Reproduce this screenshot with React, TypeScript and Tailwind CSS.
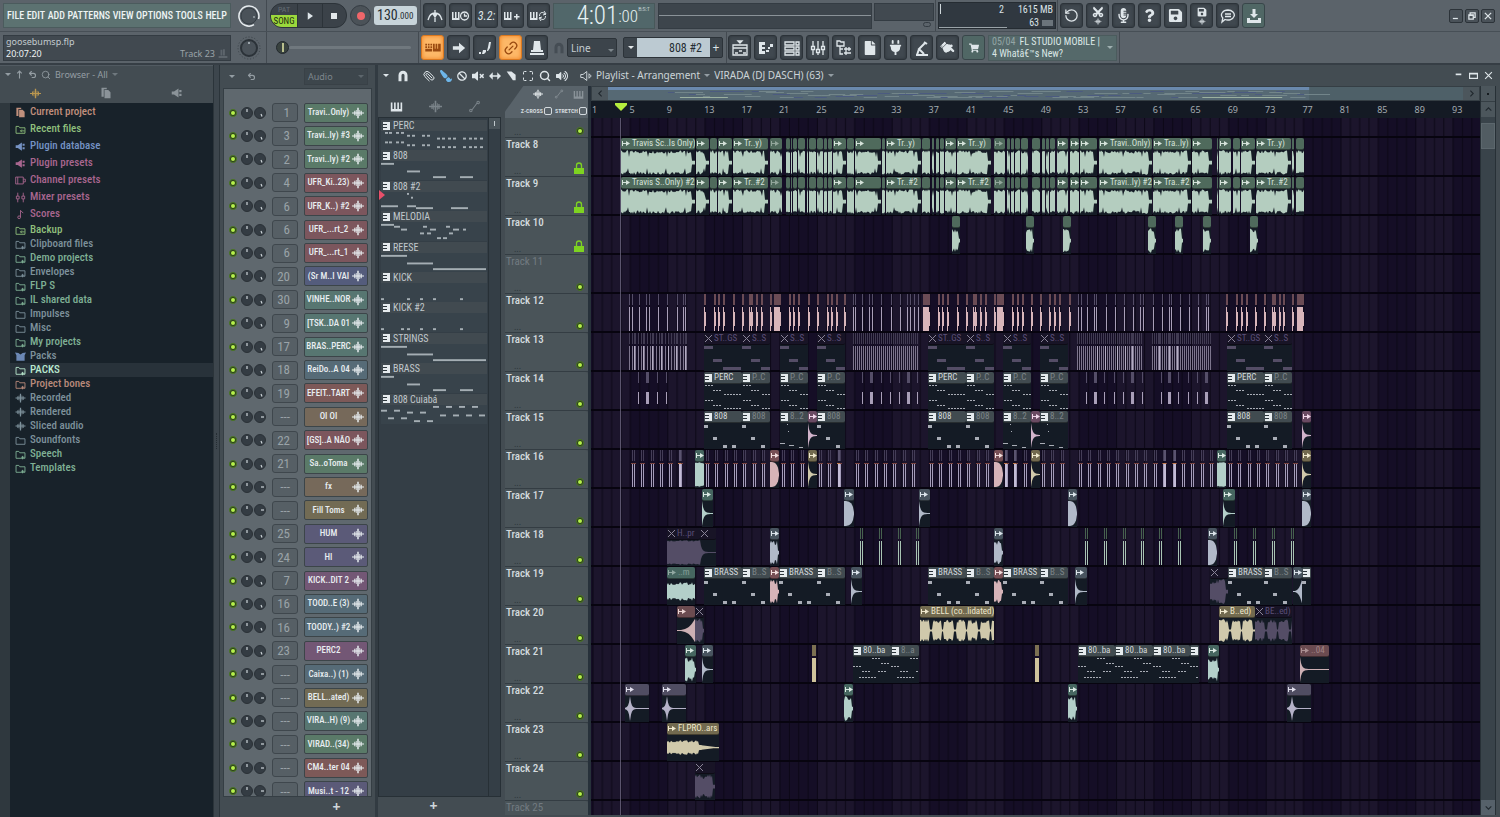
import React from "react";
import {
  FaBan,
  FaCut,
  FaFile,
  FaHandPointRight,
  FaMicrophoneAlt,
  FaPaintBrush,
  FaPlug,
  FaQuestion,
  FaSave,
  FaShoppingCart,
  FaVolumeMute,
  FaVolumeUp,
} from "react-icons/fa";
import { Link2, Maximize, Paperclip, RotateCcw, Search, Undo2 } from "lucide-react";

const NARROW = "font-['Roboto_Condensed',Roboto,sans-serif]";

const BAR = 9.35;
const BODY_H = 25;

type Tone = "green" | "teal" | "slate" | "pink" | "plum" | "gold" | "mauve" | "lilac" | "pattern" | "muted";
type Wave = "voice" | "decay" | "blob" | "reverse" | "thick" | "spike" | "fade" | "burst" | "phrases" | "solid";

interface Clip {
  x: number;
  w: number;
  label?: string;
  dim?: boolean;
  tone: Tone;
  wave?: Wave;
  notes?: number[][];
}

interface Hits {
  xs: number[];
  color: string;
  head: string;
  w?: number;
  top?: number;
  h?: number;
  tail?: boolean;
  tick?: string;
}

interface Track {
  name: string;
  locked?: boolean;
  off?: boolean;
  clips?: Clip[];
  hits?: Hits[];
}

const headTone: Record<Tone, string> = {
  green: "bg-[#4f6a5c] text-[#d5e2da]",
  teal: "bg-[#466660] text-[#dbe9e4]",
  slate: "bg-[#48545f] text-[#dbe3ea]",
  pink: "bg-[#774f55] text-[#f0dcdc]",
  plum: "bg-[#6a4b63] text-[#f0d8ea]",
  gold: "bg-[#726a4f] text-[#efe8cd]",
  mauve: "bg-[#6b4b50] text-[#ecd6d4]",
  lilac: "bg-[#504d62] text-[#e2e0ee]",
  pattern: "bg-[#414b50] text-[#d3d9dc]",
  muted: "bg-[#181426] text-[#5b4f78]",
};

const waveTone: Record<Tone, string> = {
  green: "#b4cdbf",
  teal: "#b3cfc9",
  slate: "#b1b9c8",
  pink: "#d6b3b8",
  plum: "#d2b4cb",
  gold: "#d0c9ab",
  mauve: "#cdb0b4",
  lilac: "#b5b2c8",
  pattern: "#a9adb6",
  muted: "#544d66",
};

const triple = (x: number, y: number) => [
  [x, y, 2],
  [x + 3, y, 2],
  [x + 6, y, 2],
];

const perc = [
  ...triple(1, 1),
  ...triple(9, 6),
  ...triple(20, 10),
  ...triple(29, 10),
  ...triple(1, 16),
  ...triple(9, 21),
  ...triple(20, 24),
  ...triple(29, 24),
];
const bass = [[0, 2, 4, 3], [9, 14, 4, 3], [19, 22, 4, 3], [28, 22, 4, 3]];
const bass2 = [[0, 20, 5], [7, 1, 1], [8, 8, 1], [9, 22, 5], [19, 24, 4]];
const strings = [[0, 1, 9, 3], [9, 14, 9, 3], [19, 22, 18, 3]];
const cuiaba = [
  ...triple(0, 9),
  ...triple(9, 14),
  ...triple(19, 1),
  ...triple(28, 6),
  ...triple(6, 20),
  ...triple(15, 20),
  ...triple(25, 14),
];

const pat = (x: number, w: number, label: string, notes: number[][], dim = false): Clip => ({
  x,
  w,
  label,
  notes,
  dim,
  tone: "pattern",
});
const aud = (x: number, w: number, tone: Tone, wave: Wave, label = "", dim = false): Clip => ({
  x,
  w,
  tone,
  wave,
  label,
  dim,
});
const ghost = (x: number, w: number, label: string): Clip => ({ x, w, label, tone: "muted", notes: strings });

const vocals = (first: string, short: string, long: string, mid: string): Clip[] =>
  [
    [30, 74, first],
    [105, 13], [119, 7, "", 1], [127, 14], [142, 35, short],
    [179, 12, "", 1], [195, 4], [200, 1], [202, 4], [207, 7, "", 1],
    [216, 1], [218, 7, "", 1], [226, 6], [233, 3], [237, 4],
    [242, 13], [256, 7, "", 1], [264, 26], [291, 3],
    [295, 35, short], [331, 8], [341, 2], [345, 3], [349, 4],
    [354, 11], [366, 34, short], [403, 11, "", 1], [416, 3], [420, 3], [424, 5],
    [430, 7, "", 1], [441, 8, "", 1], [451, 3], [455, 3], [459, 5],
    [466, 11], [479, 9], [489, 17], [508, 53, long],
    [562, 38, mid], [601, 20], [626, 1], [628, 12],
    [642, 7, "", 1], [650, 14], [665, 35, short], [701, 2], [705, 8, "", 1],
  ].map((c) => aud(c[0] as number, c[1] as number, "green", "voice", (c[2] as string) || "", c[3] === 1));

const range = (from: number, to: number, step: number) => {
  const out: number[] = [];
  for (let x = from; x < to; x += step) out.push(Math.round(x));
  return out;
};

const pairs = (spans: number[][]) => spans.flatMap(([a, b]) => range(a, b, BAR).flatMap((x) => [x, x + 2]));

const lilacHits = { color: "#a99fb8", head: "#554e68" };
const pinkHits = { color: "#d8b5ba", head: "#6b4c55" };
const greenHits = { color: "#a9c4b4", head: "#47614f" };

const tracks: Track[] = [
  {
    name: "Track 8",
    locked: true,
    clips: vocals("Travis Sc..ls Only)", "Tr..y)", "Travi..Only)", "Tra..ly)"),
  },
  {
    name: "Track 9",
    locked: true,
    clips: vocals("Travis S..Only) #2", "Tr..#2", "Travi..ly) #2", "Tra..#2"),
  },
  {
    name: "Track 10",
    locked: true,
    clips: [361, 435, 472, 557, 584, 612, 659].map((x) => aud(x, 8, "green", "burst")),
  },
  { name: "Track 11", off: true },
  {
    name: "Track 12",
    hits: [
      {
        ...lilacHits,
        w: 1,
        xs: [38, 41, 48, 55, 58, 67, 76, 86, 92, 94, 262, 264, 271, 278, 281, 290, 300, 309, 316, 319, 323, 327, 487,
          490, 496, 503, 505, 515, 524, 533, 542, 549, 552, 562, 571, 578, 580, 589, 598, 607, 615, 617],
      },
      {
        ...pinkHits,
        w: 1,
        tail: true,
        xs: [113, 123, 127, 132, 142, 151, 158, 160, 165, 170, 179, 198, 202, 207, 217, 226, 236, 240, 245, 253,
          347, 351, 356, 366, 375, 382, 384, 389, 394, 403, 421, 426, 431, 440, 449, 458, 463, 468, 478,
          635, 645, 650, 655, 664, 673, 681, 683, 688, 692, 701],
      },
      { ...pinkHits, w: 6, tail: true, xs: [183, 332, 406, 706] },
    ],
  },
  {
    name: "Track 13",
    hits: [
      {
        color: "#7d758d",
        head: "#413b52",
        w: 1,
        xs: [...range(38, 96, 3), ...range(262, 328, 2), ...range(486, 552, 2), ...range(561, 621, 2)],
      },
      { color: "#b3abc2", head: "#413b52", w: 1, xs: [43, 52, 61, 70, 77, 85, 94, 506, 514, 526, 534, 541, 568, 578, 586] },
    ],
    clips: [
      ghost(113, 38, "ST..GS"), ghost(151, 28, "S..S"), ghost(189, 28, "S..S"), ghost(226, 28, "S..S"),
      ghost(337, 38, "ST..GS"), ghost(375, 28, "S..S"), ghost(412, 28, "S..S"), ghost(449, 28, "S..S"),
      ghost(636, 37, "ST..GS"), ghost(673, 28, "S..S"),
    ],
  },
  {
    name: "Track 14",
    hits: [
      {
        ...lilacHits,
        w: 1,
        top: 20,
        h: 12,
        xs: [47, 66, 75, 271, 290, 299, 308, 326, 495, 513, 523, 532, 551, 570, 587, 597, 606],
      },
      { ...lilacHits, w: 3, top: 20, h: 12, xs: [55, 279, 316, 503, 540, 577, 614] },
    ],
    clips: [
      pat(113, 38, "PERC", perc), pat(151, 28, "P..C", perc, true), pat(189, 28, "P..C", perc, true),
      pat(226, 28, "P..C", perc, true), pat(337, 38, "PERC", perc), pat(375, 28, "P..C", perc, true),
      pat(412, 28, "P..C", perc, true), pat(449, 28, "P..C", perc, true), pat(636, 37, "PERC", perc),
      pat(673, 28, "P..C", perc, true),
    ],
  },
  {
    name: "Track 15",
    clips: [
      pat(113, 38, "808", bass), pat(151, 28, "808", bass, true), pat(189, 28, "8..2", bass2, true),
      aud(217, 9, "plum", "decay"), pat(226, 28, "808", bass, true),
      pat(337, 38, "808", bass), pat(375, 28, "808", bass, true), pat(412, 28, "8..2", bass2, true),
      aud(440, 9, "plum", "decay"), pat(449, 28, "8..2", bass2, true),
      pat(636, 37, "808", bass), pat(673, 28, "808", bass, true), aud(711, 9, "plum", "decay"),
    ],
  },
  {
    name: "Track 16",
    hits: [
      {
        color: "#a59dba",
        head: "#443d57",
        w: 1,
        tick: "#7a4440",
        xs: pairs([[41, 96], [115, 178], [191, 216], [228, 256], [265, 328], [339, 402], [414, 439], [451, 476], [488, 622], [638, 708]]),
      },
      { color: "#c3bcd6", head: "#5a536f", w: 2, tick: "#c07a4a", xs: [88, 247, 414, 423, 573, 583] },
    ],
    clips: [
      aud(104, 9, "teal", "solid"), aud(179, 9, "pink", "blob"), aud(217, 9, "gold", "decay"),
      aud(403, 9, "pink", "blob"), aud(440, 9, "gold", "decay"),
      aud(626, 9, "teal", "solid"), aud(711, 9, "gold", "decay"),
    ],
  },
  {
    name: "Track 17",
    clips: [
      aud(111, 11, "teal", "decay"), aud(253, 10, "slate", "blob"), aud(328, 11, "slate", "decay"),
      aud(477, 9, "slate", "blob"), aud(632, 12, "teal", "decay"), aud(711, 9, "slate", "blob"),
    ],
  },
  {
    name: "Track 18",
    hits: [
      {
        ...greenHits,
        w: 1,
        xs: [269, 288, 307, 325, 494, 513, 532, 550, 568, 587, 643, 662, 681, 700].flatMap((x) => [x, x + 2]),
      },
    ],
    clips: [
      aud(76, 33, "muted", "solid", "H..pr"), aud(109, 16, "muted", "decay"),
      aud(179, 9, "slate", "burst"), aud(403, 9, "slate", "burst"), aud(617, 9, "slate", "blob"),
    ],
  },
  {
    name: "Track 19",
    clips: [
      aud(76, 28, "teal", "thick", "..m", true), pat(113, 38, "BRASS", bass), pat(151, 28, "B..S", bass, true),
      aud(179, 9, "pink", "burst"), pat(188, 38, "BRASS", bass), pat(226, 28, "B..S", bass, true),
      aud(260, 11, "slate", "decay"), pat(337, 38, "BRASS", bass), pat(375, 28, "B..S", bass, true),
      aud(403, 9, "pink", "burst"), pat(412, 37, "BRASS", bass), pat(449, 28, "B..S", bass, true),
      aud(484, 12, "slate", "decay"), aud(619, 18, "muted", "burst"), pat(637, 36, "BRASS", bass),
      pat(673, 28, "B..S", bass, true), aud(702, 9, "slate", "reverse"), pat(711, 9, "", bass),
    ],
  },
  {
    name: "Track 20",
    clips: [
      aud(86, 18, "mauve", "reverse"), aud(104, 9, "muted", "burst"),
      aud(329, 74, "gold", "phrases", "BELL (co..lidated)"), aud(628, 36, "gold", "phrases", "B..ed)"),
      aud(664, 37, "muted", "phrases", "BE..ed)"),
    ],
  },
  {
    name: "Track 21",
    hits: [{ color: "#cfc39b", head: "#7c7152", w: 4, xs: [221, 444] }],
    clips: [
      aud(94, 11, "teal", "burst"), aud(111, 11, "slate", "decay"),
      pat(262, 38, "80..ba", cuiaba), pat(300, 28, "8..a", cuiaba, true),
      pat(487, 37, "80..ba", cuiaba), pat(524, 38, "80..ba", cuiaba), pat(562, 37, "80..ba", cuiaba),
      pat(599, 9, "", cuiaba), aud(617, 11, "teal", "burst"), aud(709, 29, "mauve", "decay", "..04", true),
    ],
  },
  {
    name: "Track 22",
    clips: [
      aud(34, 24, "lilac", "spike"), aud(71, 24, "lilac", "spike"), aud(253, 9, "teal", "burst"),
      aud(477, 9, "teal", "burst"), aud(696, 24, "lilac", "spike"),
    ],
  },
  { name: "Track 23", clips: [aud(76, 52, "gold", "fade", "FLPRO..ars")] },
  { name: "Track 24", clips: [aud(104, 20, "muted", "burst")] },
];

const noise = (n: number) => {
  const s = Math.sin(n * 12.9898) * 43758.5453;
  return s - Math.floor(s);
};

function amplitude(kind: Wave, i: number, w: number, seed: number) {
  const t = i / w;
  const r = noise(i + seed);
  switch (kind) {
    case "voice":
      if (w > 12 && i > w - 4) return 0.15;
      return (i + seed) % 19 === 0 ? 0.45 : 0.72 + 0.26 * r;
    case "phrases": {
      const p = i % 24;
      return (p > 9 && p < 13) || p > 21 ? 0.08 : 0.55 + 0.35 * r;
    }
    case "decay":
      return i === 0 ? 1 : 0.9 * Math.exp(-i / 1.6) + 0.04;
    case "blob":
      return Math.sqrt(Math.max(0.01, 1 - t ** 3));
    case "reverse":
      return 0.04 + 0.9 * t ** 3;
    case "thick":
      return 0.5 + 0.25 * r;
    case "spike":
      return 0.04 + 0.95 * Math.exp(-Math.abs(i - 5) / 1.3);
    case "fade":
      return t < 0.6 ? 0.4 + 0.2 * r : Math.max(0.05, 0.55 * (1 - t));
    case "burst":
      return t > 0.85 ? 0.15 : 0.6 + 0.38 * noise(i + seed);
    default:
      return 0.88 + 0.1 * r;
  }
}

const Waveform: React.FC<{ kind: Wave; w: number; seed: number; color: string }> = ({ kind, w, seed, color }) => {
  const mid = BODY_H / 2;
  const up: string[] = [];
  const down: string[] = [];
  for (let i = 0; i <= w; i++) {
    const a = amplitude(kind, i, w, seed) * mid;
    const b = kind === "voice" ? amplitude(kind, i, w, seed + 77) * mid : a;
    up.push(`${i},${mid - a}`);
    down.unshift(`${i},${mid + b}`);
  }
  return (
    <svg viewBox={`0 0 ${w} ${BODY_H}`} preserveAspectRatio="none" className="block h-[25px] w-full">
      <polygon points={[...up, ...down].join(" ")} fill={color} />
    </svg>
  );
};

const ArrowMark = () => (
  <svg viewBox="0 0 8 7" className="block h-[7px] w-[8px]" fill="currentColor">
    <path d="M0 1h1v5H0zM1 3h3v1H1zM4 1l4 2.500L4 6z" />
  </svg>
);

const PatternMark = () => (
  <svg viewBox="0 0 7 8" className="block h-[8px] w-[7px] shrink-0">
    <path d="M0 0h7v8H0z" fill="#e6ebee" />
    <path d="M0 2h4v1H0zM0 5h4v1H0z" fill="#2b343a" />
  </svg>
);

const CrossMark = () => (
  <svg viewBox="0 0 7 7" className="block h-[7px] w-[7px]" stroke="#8a8498" fill="none">
    <path d="M0 0l7 7M7 0L0 7" />
  </svg>
);

const ClipView: React.FC<{ clip: Clip }> = ({ clip }) => {
  const { x, w, label, dim, tone, wave, notes } = clip;
  return (
    <div className="absolute top-0 h-[38px] overflow-hidden bg-[#141b25]" style={{ left: x, width: w }}>
      <div
        className={`flex h-[12px] items-center gap-[2px] overflow-hidden rounded-[2px] border-b border-black/40 pl-px text-[9px] leading-[11px] whitespace-nowrap ${headTone[tone]}`}
      >
        {w > 8 && (
          <span className={`shrink-0 ${dim && tone !== "pattern" ? "opacity-50" : ""}`}>
            {tone === "muted" ? <CrossMark /> : tone === "pattern" ? <PatternMark /> : <ArrowMark />}
          </span>
        )}
        {label && <span className={dim ? "opacity-40" : ""}>{label}</span>}
      </div>
      {wave && <Waveform kind={wave} w={w} seed={x} color={waveTone[tone]} />}
      {notes && (
        <svg viewBox={`0 0 ${w} 26`} className="block h-[26px] w-full" fill={waveTone[tone]}>
          {notes.map(([nx, ny, nw, nh], i) => (
            <rect key={i} x={nx} y={ny} width={nw} height={nh || 1} />
          ))}
        </svg>
      )}
    </div>
  );
};

const Lane: React.FC<{ track: Track }> = ({ track }) => (
  <div className="relative h-[39px] shrink-0 border-b-2 border-[#07040f]">
    {track.hits && (
      <svg className="absolute inset-0 h-full w-full">
        {track.hits.map((group, g) =>
          group.xs.map((x) => (
            <React.Fragment key={`${g}-${x}`}>
              <rect x={x} y={0} width={(group.w ?? 1) + (group.tail ? 1 : 0)} height={11} fill={group.head} />
              <rect x={x} y={group.top ?? 13} width={group.w} height={group.h ?? 25} fill={group.color} />
              {group.tail && <rect x={x + (group.w ?? 1)} y={18} width={1} height={14} fill={group.color} />}
              {group.tick && <rect x={x - 1} y={13} width={3} height={1} fill={group.tick} />}
            </React.Fragment>
          ))
        )}
      </svg>
    )}
    {track.clips?.map((c, i) => (
      <ClipView key={i} clip={c} />
    ))}
  </div>
);

const GridBackdrop = () => (
  <svg className="absolute inset-0 h-full w-full">
    <defs>
      <pattern id="bars" x="1.5" y="0" width={BAR * 8} height="40" patternUnits="userSpaceOnUse">
        <rect width={BAR * 4} height="40" fill="#1c152c" />
        <rect x={BAR * 4} width={BAR * 4} height="40" fill="#150e26" />
        {range(0, 8, 1).map((n) => (
          <rect key={n} x={n * BAR} width="1" height="40" fill="#0b0716" />
        ))}
      </pattern>
    </defs>
    <rect width="100%" height="100%" fill="url(#bars)" />
  </svg>
);

/* ---------- toolbar ---------- */

const TOOL =
  "flex h-[25px] w-[23px] shrink-0 items-center justify-center rounded-[3px] border border-[#2c3339] bg-[#40484f] text-[#dfe6ea] shadow-[inset_0_0_3px_#2b3238]";
const TOOL_ON =
  "flex h-[25px] w-[23px] shrink-0 items-center justify-center rounded-[3px] border border-[#d9781f] bg-[#fdb868] text-[#9a4a10] shadow-[inset_0_0_4px_#f08020]";
const TOOL_TEAL =
  "flex h-[25px] w-[23px] shrink-0 items-center justify-center rounded-[3px] border border-[#39464a] bg-[#506765] text-[#dfe6ea]";

const Tool: React.FC<{ label: string; className?: string; children: React.ReactNode }> = ({
  label,
  className = TOOL,
  children,
}) => (
  <button type="button" aria-label={label} className={className}>
    {children}
  </button>
);

const Glyph: React.FC<{ d: string; fill?: boolean; className?: string }> = ({
  d,
  fill,
  className = "h-[16px] w-[16px]",
}) => (
  <svg
    viewBox="0 0 16 16"
    className={className}
    fill={fill ? "currentColor" : "none"}
    stroke={fill ? "none" : "currentColor"}
    strokeWidth="1.3"
  >
    <path d={d} />
  </svg>
);

const PIANO = "M1 3h2v8h2V3h2v8h2V3h2v8h2V3h2v11H1z";
const PIANO_SMALL = "M0 4h1.500v6H3V4h1.500v6H6V4h1.500v8H0z";
const WAVE = "M0 7.200h16v1.600H0zM3 5h1.500v6H3zM7 1h2v14H7zM5.200 4h1v8h-1zM9.800 4h1v8h-1zM11.500 5H13v6h-1.500z";
const FOLDER = "M1.500 3.500h4l1.500 2h7.500v8h-13z";
const NODES = "M2 13a1.500 1.500 0 1 0 3 0 1.500 1.500 0 1 0-3 0M11 3a1.500 1.500 0 1 0 3 0 1.500 1.500 0 1 0-3 0M5 12l6-8";
const MAGNET = "M2 15V7a6 6 0 0 1 12 0v8h-4V7a2 2 0 0 0-4 0v8z";
const MIXER = "M3 1v5M3 10v5M1.500 6.500h3v3h-3zM8 1v8M8 13v2M6.500 9.500h3v3h-3zM13 1v5M13 10v5M11.500 6.500h3v3h-3z";
const CHAT = "M8 2a6.500 5 0 1 1-3 9.500L2 14l.8-4A6.500 5 0 0 1 8 2M5 6h6M5 8.500h6";

const Caret = ({ className = "border-t-[#aab3b8]" }: { className?: string }) => (
  <span className={`inline-block h-0 w-0 border-x-[3px] border-t-[3px] border-x-transparent ${className}`} />
);

const Divider = () => <div className="h-full w-px shrink-0 bg-[#434a51]" />;

const menus = ["FILE", "EDIT", "ADD", "PATTERNS", "VIEW", "OPTIONS", "TOOLS", "HELP"];

const Toolbar = () => (
  <header className="shrink-0 border-b-2 border-[#363e45] bg-[#5b636a] text-[#dfe6ea]">
    <div className="flex h-[32px] items-center border-b border-[#474f56]">
      <nav
        className={`ml-[3px] flex h-[25px] w-[228px] shrink-0 items-center justify-between border border-[#4b5b5d] bg-[#5c7271] px-[3px] text-[10px] font-medium text-[#eef4f4] ${NARROW}`}
      >
        {menus.map((m) => (
          <button key={m} type="button">
            {m}
          </button>
        ))}
      </nav>
      <div className="flex h-full w-[35px] shrink-0 items-center justify-center">
        <svg viewBox="0 0 24 24" className="h-[24px] w-[24px]" fill="none">
          <path d="M17 20.700A10 10 0 1 1 21.500 15" stroke="#e8edf0" strokeWidth="1.500" />
          <circle cx="12" cy="12" r="8" fill="#4a5259" stroke="#343c43" />
          <circle cx="17" cy="13" r="1" fill="#9aa3a8" />
        </svg>
      </div>
      <Divider />
      <div className="ml-[3px] flex h-[25px] w-[77px] shrink-0 overflow-hidden rounded-[12px] border border-[#2c3339] bg-[#3b4249]">
        <div className={`flex w-[26px] flex-col items-center justify-end ${NARROW}`}>
          <button type="button" className="text-[8px] leading-[11px] text-[#636c73]">
            PAT
          </button>
          <button type="button" className="h-[12px] w-full bg-[#9bd83c] text-[9px] leading-[12px] text-[#1d2a10]">
            SONG
          </button>
        </div>
        <button type="button" aria-label="Play" className="flex flex-1 items-center justify-center border-l border-[#2c3339]">
          <Glyph fill d="M5 3l7 5-7 5z" className="h-[12px] w-[12px]" />
        </button>
        <button type="button" aria-label="Stop" className="flex flex-1 items-center justify-center border-l border-[#2c3339]">
          <span className="h-[6px] w-[6px] bg-[#e3e8ea]" />
        </button>
      </div>
      <button
        type="button"
        aria-label="Record"
        className="ml-[3px] flex h-[21px] w-[21px] shrink-0 items-center justify-center rounded-full border border-[#343b42] bg-[#4b5258]"
      >
        <span className="h-[8px] w-[8px] rounded-full bg-[#f0666a]" />
      </button>
      <div
        className={`ml-[3px] flex h-[19px] w-[43px] shrink-0 items-center rounded-[3px] bg-[#c8d4da] pl-[3px] text-[14px] text-[#252d33] ${NARROW}`}
      >
        130<span className="pt-[3px] text-[9px]">.000</span>
      </div>
      <div className="ml-[3px] h-full">
        <Divider />
      </div>
      <div className="ml-[2px] flex shrink-0 gap-[3px]">
        <Tool label="Metronome"><Glyph d="M1 12c1-4 3-7 7-7s6 3 7 7M8 2v12M6 6l2 3 2-3z" /></Tool>
        <Tool label="Wait for input">
          <svg viewBox="0 0 18 16" className="h-[16px] w-[18px]">
            <path d={PIANO_SMALL} fill="currentColor" />
            <path d="M12.500 4a4 4 0 1 0 .01 0M12.500 5.500V8H15" fill="none" stroke="currentColor" strokeWidth="1.300" />
          </svg>
        </Tool>
        <Tool label="Countdown"><span className={`text-[12px] italic ${NARROW}`}>3.2:</span></Tool>
        <Tool label="Overdub">
          <svg viewBox="0 0 18 16" className="h-[16px] w-[18px]" fill="currentColor">
            <path d={PIANO_SMALL} />
            <path d="M10 8h2V6h1.500v2h2v1.500h-2v2H12v-2h-2z" />
          </svg>
        </Tool>
        <Tool label="Loop record">
          <svg viewBox="0 0 18 16" className="h-[16px] w-[18px]">
            <path d={PIANO_SMALL} fill="currentColor" />
            <path d="M9.500 8c0-5 5-4 6-1M15.500 8c0 5-5 4-6 1M14 3l2 3-3 1M11 13l-2-3 3-1" fill="none" stroke="currentColor" />
          </svg>
        </Tool>
      </div>
      <div
        className={`ml-[3px] flex h-[26px] w-[102px] shrink-0 items-center justify-end border border-[#48585a] bg-[#51676a] pr-[4px] text-[25px] leading-[24px] font-light text-[#e6f2f4] ${NARROW}`}
      >
        4:01<span className="text-[17px]">:00</span>
        <span className="self-start text-[6px] leading-[10px]">B:S:T</span>
      </div>
      <div className="ml-[3px] flex h-[26px] w-[214px] shrink-0 items-center border border-[#343c43] bg-[#3d454c]">
        <div className="h-px w-full bg-[#8a9298]" />
      </div>
      <div className="ml-[2px] flex h-[26px] w-[60px] shrink-0 flex-col items-end">
        <div className="h-[18px] w-full border border-[#343c43] bg-[#414950]" />
        <span className="mt-px mr-[3px] h-[5px] w-[8px] rounded-full border border-[#343c43]" />
      </div>
      <div className="ml-px h-full">
        <Divider />
      </div>
      <div className={`ml-[2px] flex h-[27px] w-[118px] shrink-0 border border-[#252c32] bg-[#303840] text-[10px] text-[#dbe3e7] ${NARROW}`}>
        <div className="flex w-[68px] justify-between border-b border-[#9aa3a8] pt-px pr-[3px] pl-px leading-[11px]">
          <span className="h-[10px] w-px bg-[#d0d8dc]" />
          <span>2</span>
        </div>
        <div className="flex flex-1 flex-col items-end pr-[2px] leading-[13px] whitespace-nowrap">
          <span>1615 MB</span>
          <span className="flex items-center gap-[3px]">
            63 <span className="h-[6px] w-[11px] bg-[#6b747b]" />
          </span>
        </div>
      </div>
      <div className="ml-px h-full">
        <Divider />
      </div>
      <div className="ml-[2px] flex shrink-0 gap-[3px]">
        <Tool label="Undo"><RotateCcw size={15} /></Tool>
        <Tool label="Cut audio">
          <span className="flex flex-col items-center">
            <FaCut size={12} className="-rotate-90" />
            <Glyph fill d={WAVE} className="h-[7px] w-[10px]" />
          </span>
        </Tool>
        <Tool label="Record audio"><FaMicrophoneAlt size={15} /></Tool>
        <Tool label="Help"><FaQuestion size={13} /></Tool>
        <Tool label="Save"><FaSave size={15} /></Tool>
        <Tool label="Export">
          <span className="flex flex-col items-center gap-px">
            <FaSave size={10} />
            <Glyph fill d={WAVE} className="h-[7px] w-[10px]" />
          </span>
        </Tool>
        <Tool label="Chat"><Glyph d={CHAT} /></Tool>
        <Tool label="Download" className={TOOL_TEAL}>
          <Glyph fill d="M6.500 1h3v5H12L8 10 4 6h2.500zM1 10h3v2h8v-2h3v5H1z" />
        </Tool>
      </div>
      <div className="mr-[5px] ml-auto flex gap-[2px]">
        {[
          ["Minimize", "M3 12h8"],
          ["Restore", "M5 6V3h8v7h-3M3 6h7v7H3zM3 7h7"],
          ["Close", "M3 3l10 10M13 3L3 13"],
        ].map(([label, d]) => (
          <button
            key={label}
            type="button"
            aria-label={label}
            className="flex h-[14px] w-[14px] items-center justify-center rounded-[2px] border border-[#2c3339] bg-[#4a5259]"
          >
            <Glyph d={d} className="h-[10px] w-[10px] stroke-2" />
          </button>
        ))}
      </div>
    </div>

    <div className="flex h-[31px] items-center">
      <div className="ml-[3px] flex h-[26px] w-[228px] shrink-0 flex-col justify-between border border-[#343c43] bg-[#414950] px-[2px] text-[9px] leading-[12px] font-['Noto_Sans',sans-serif]">
        <span className="text-[#c3cbcf]">goosebumsp.flp</span>
        <div className="flex items-center">
          <span className="text-[#eef2f4]">20:07:20</span>
          <span className="mr-[3px] ml-auto text-[#9aa3a8]">Track 23</span>
          <Glyph fill d="M1 12h14v3H1zM4 2h3v9H4zM8 1h3v10H8z" className="h-[11px] w-[10px] text-[#5d656c]" />
        </div>
      </div>
      <div className="flex h-full w-[35px] shrink-0 items-center justify-center">
        <svg viewBox="0 0 24 24" className="h-[24px] w-[24px]" fill="none">
          <circle cx="12" cy="12" r="11" stroke="#3a4248" strokeDasharray="1 2" />
          <circle cx="12" cy="12" r="8" fill="#4a5259" stroke="#2b3238" strokeWidth="2" />
          <circle cx="12" cy="7" r="1" fill="#b9c2c7" />
        </svg>
      </div>
      <Divider />
      <div className="flex w-[151px] shrink-0 items-center pl-[9px]">
        <span className="flex h-[13px] w-[13px] shrink-0 items-center justify-center rounded-full border border-[#23292e] bg-[#39423f]">
          <span className="h-[9px] w-[2px] bg-[#b9bf8d]" />
        </span>
        <span className="h-[3px] w-[122px] rounded-[2px] bg-[#70787e]" />
      </div>
      <Divider />
      <div className="ml-[2px] flex shrink-0 gap-[3px]">
        <Tool label="Typing keyboard to piano" className={TOOL_ON}>
          <svg viewBox="0 0 18 14" className="h-[12px] w-[18px]" fill="currentColor">
            <path d="M0 2h2v2H0zM3 2h2v2H3zM6 2h2v2H6zM0 5h2v2H0zM3 5h2v2H3zM6 5h2v2H6zM0 8h8v3H0zM9 2h2v6h1V2h2v6h1V2h3v9H9z" />
          </svg>
        </Tool>
        <Tool label="Step"><Glyph fill d="M1 6h7V2l7 6-7 6v-4H1z" className="h-[14px] w-[14px]" /></Tool>
        <Tool label="Scroll"><Glyph fill d="M12 2h2l-1 6-2 3h-1l1-4zM6 10h3v2l-2 2H5zM2 12h2v2H2z" /></Tool>
        <Tool label="Link" className={TOOL_ON}><Link2 size={16} className="-rotate-45" /></Tool>
        <Tool label="Multilink"><Glyph fill d="M5 1h6l1 9H4zM2 10h12v2H2zM1 13h14v2H1z" /></Tool>
      </div>
      <Glyph d={MAGNET} fill className="ml-[5px] h-[12px] w-[12px] shrink-0 text-[#454d54]" />
      <div className="relative ml-[2px] h-[19px] w-[50px] shrink-0">
        <select
          aria-label="Snap"
          defaultValue="Line"
          className="block h-[19px] w-full appearance-none rounded-[2px] border border-[#2c3339] bg-[#3c444b] pl-[3px] text-[10px] leading-[16px] text-[#c5cdd2] font-['Noto_Sans',sans-serif]"
        >
          <option>Line</option>
        </select>
        <span className="absolute top-[5px] right-[3px] leading-[6px]">
          <Caret className="border-t-[#7e878d]" />
        </span>
      </div>
      <div className="ml-[6px] flex h-[21px] w-[100px] shrink-0 rounded-[2px] border border-[#2c3339] bg-[#3c444b]">
        <button type="button" aria-label="Pattern list" className="flex w-[13px] items-center justify-center">
          <Caret className="border-t-[#e3e8ea]" />
        </button>
        <input
          aria-label="Pattern"
          defaultValue="808 #2"
          className={`h-full w-[73px] bg-[#bccad2] pr-[8px] text-right text-[12px] text-[#252d33] ${NARROW}`}
        />
        <button type="button" className="w-[12px] text-[12px] leading-[18px]">
          +
        </button>
      </div>
      <div className="ml-[3px] h-full">
        <Divider />
      </div>
      <div className="ml-px flex shrink-0 gap-[3px]">
        <Tool label="Playlist"><Glyph d="M1 5h14v10H1zM1 8h14M3 13h3M7 11h3M11 13h3M6 1l2 2 2-2z" /></Tool>
        <Tool label="Piano roll"><Glyph fill d="M1 2h6v3H4v2h3v2H4v2h3v3H1zM8 10h3v2H8zM10 7h2v2h-2zM12 4h3v3h-3z" /></Tool>
        <Tool label="Channel rack"><Glyph d="M1 2h9v3H1zM1 7h9v3H1zM1 12h9v3H1zM12 2h3v3h-3zM12 7h3v3h-3zM12 12h3v3h-3z" /></Tool>
        <Tool label="Mixer"><Glyph d={MIXER} /></Tool>
        <Tool label="Browser"><Glyph d="M1 1h3l1 1h3v4H1zM4 6v8h3M4 9h3M10 7v8M8 9h7M8 13h7M13 7v4" /></Tool>
        <Tool label="Plugin picker"><FaFile size={14} /></Tool>
        <Tool label="Plugins"><FaPlug size={15} /></Tool>
        <Tool label="Tempo tapper"><Glyph d="M10 2l3 2M11 3L5 9l5 5M2 15h12M5 9l-2 6" className="h-[16px] w-[16px] stroke-2" /></Tool>
        <Tool label="Touch"><FaHandPointRight size={14} className="rotate-45" /></Tool>
        <Tool label="Shop" className={TOOL_TEAL}><FaShoppingCart size={10} /></Tool>
      </div>
      <div className="ml-[3px] flex h-[26px] w-[129px] shrink-0 items-center justify-between border border-[#4b5b5d] bg-[#55696a] px-[3px] text-[10px] leading-[12px]">
        <p className={`whitespace-nowrap text-[#dbe7e6] ${NARROW}`}>
          <span className="mr-[4px] text-[#93a5a5]">05/04</span>FL STUDIO MOBILE |
          <br />4 Whatâ€™s New?
        </p>
        <Caret className="border-t-[#9fb0b0]" />
      </div>
      <div className="ml-[2px] h-full">
        <Divider />
      </div>
    </div>
  </header>
);

/* ---------- browser ---------- */

const copyIcon = "M2 1h7v2H5v10H2zM6 4h5l3 3v8H6z";
const speakerIcon = "M1 6h3l6-4v12l-6-4H1zM11 4h3v3h-3zM11 9h3v3h-3z";

const browserTop = [
  ["Current project", "text-[#c08f7c]", copyIcon, true],
  ["Recent files", "text-[#8fbf7c]", FOLDER + "M8 10h6M8 10l2-2M8 10l2 2", false],
  ["Plugin database", "text-[#7593c4]", speakerIcon, true],
  ["Plugin presets", "text-[#a8668f]", speakerIcon, true],
  ["Channel presets", "text-[#a8668f]", "M1 3h11v10H1zM12 6h3v4h-3M4 3v10", false],
  ["Mixer presets", "text-[#a8668f]", "M4 1v5M4 10v5M2 6h4v4H2zM12 1v5M12 10v5M10 6h4v4h-4z", false],
  ["Scores", "text-[#a8668f]", "M8 2v10M8 2l4 4M8 12a2 2 0 1 1-4 0 2 2 0 1 1 4 0", false],
] as const;

const plusFolder = FOLDER + "M11 10v5M9 12h5";
const browserItems = [
  ["Backup", "text-[#8fbf7c]", FOLDER + "M8 10h6M8 10l2-2M8 10l2 2"],
  ["Clipboard files", "text-[#7d919b]", plusFolder],
  ["Demo projects", "text-[#7fb095]", plusFolder],
  ["Envelopes", "text-[#7d919b]", plusFolder],
  ["FLP S", "text-[#7fb095]", plusFolder],
  ["IL shared data", "text-[#7fb095]", plusFolder],
  ["Impulses", "text-[#7d919b]", FOLDER],
  ["Misc", "text-[#7d919b]", FOLDER],
  ["My projects", "text-[#7fb095]", plusFolder],
  ["Packs", "text-[#7d919b]", "BOX"],
  ["PACKS", "text-[#b9e8cf]", plusFolder],
  ["Project bones", "text-[#b98a7b]", plusFolder],
  ["Recorded", "text-[#7d919b]", "WAVE"],
  ["Rendered", "text-[#7d919b]", "WAVE"],
  ["Sliced audio", "text-[#7d919b]", "WAVE"],
  ["Soundfonts", "text-[#7d919b]", FOLDER],
  ["Speech", "text-[#7fb095]", plusFolder],
  ["Templates", "text-[#7fb095]", plusFolder],
];

const Browser = () => (
  <aside className="flex w-[213px] shrink-0 flex-col border-t border-[#515a61] bg-[#434c52]">
    <div className="flex h-[17px] shrink-0 items-center gap-[4px] pl-[5px] text-[9px] text-[#949da3] font-['Noto_Sans',sans-serif]">
      <Caret className="border-t-[#949da3]" />
      <Glyph d="M8 15V2M4 6l4-4 4 4" className="h-[9px] w-[9px] stroke-2" />
      <Undo2 size={9} strokeWidth={3} />
      <Search size={10} />
      <span>Browser - All</span>
      <Caret className="border-t-[#6f787e]" />
    </div>
    <div className="flex h-[20px] shrink-0 items-center justify-around text-[#8b9399]">
      <Glyph fill d={WAVE} className="h-[11px] w-[11px] text-[#b9964f]" />
      <Glyph fill d={copyIcon} className="h-[12px] w-[12px]" />
      <Glyph fill d={speakerIcon} className="h-[12px] w-[12px]" />
    </div>
    <div className="flex-1 bg-[#2f383e] pl-[10px]">
      <ul className={`h-full bg-[#18222a] pt-px text-[11px] font-medium ${NARROW}`}>
        {browserTop.map(([name, color, d, fill]) => (
          <li key={name} className={`flex h-[17px] items-center gap-[4px] pl-[5px] ${color}`}>
            <Glyph d={d} fill={fill} className="h-[11px] w-[11px]" />
            {name}
          </li>
        ))}
        {browserItems.map(([name, color, d]) => (
          <li
            key={name}
            className={`flex h-[14px] items-center gap-[4px] pl-[5px] ${color} ${name === "PACKS" ? "bg-[#28323a]" : ""}`}
          >
            {d === "WAVE" ? (
              <Glyph fill d={WAVE} className="h-[10px] w-[11px]" />
            ) : d === "BOX" ? (
              <Glyph fill d="M0 2l5 1 3 2 3-2 5-1-2 4v8H2V6z" className="h-[11px] w-[11px] text-[#6b88b5]" />
            ) : (
              <Glyph d={d} className="h-[11px] w-[11px]" />
            )}
            {name}
          </li>
        ))}
      </ul>
    </div>
  </aside>
);

/* ---------- channel rack ---------- */

const chTone: Record<string, string> = {
  green: "bg-[#5a7a68]",
  mint: "bg-[#577671]",
  pink: "bg-[#7c565d]",
  blue: "bg-[#545c7c]",
  steel: "bg-[#566b77]",
  brick: "bg-[#7d5958]",
  tan: "bg-[#76695a]",
  gold: "bg-[#726b54]",
  violet: "bg-[#5b5a78]",
  plum: "bg-[#735775]",
};

const channels = [
  ["1", "Travi..Only)", "green"], ["3", "Travi..ly) #3", "green"], ["2", "Travi..ly) #2", "green"],
  ["4", "UFR_Ki..23)", "pink"], ["6", "UFR_K..) #2", "pink"], ["6", "UFR_...rt_2", "pink"],
  ["6", "UFR_...rt_1", "pink"], ["20", "(Sr M..I VAI", "blue"], ["30", "VINHE..NOR", "mint"],
  ["9", "[TSK..DA 01", "mint"], ["17", "BRAS..PERC", "mint"], ["18", "ReiDo..A 04", "steel"],
  ["19", "EFEIT..TART", "brick"], ["---", "OI OI", "tan"], ["22", "[GS]..A NÃO", "pink"],
  ["21", "Sa..oToma", "green"], ["---", "fx", "tan"], ["---", "Fill Toms", "gold"],
  ["25", "HUM", "violet"], ["24", "HI", "violet"], ["7", "KICK..DIT 2", "plum"],
  ["16", "TOOD..E (3)", "steel"], ["16", "TOODY..) #2", "steel"], ["23", "PERC2", "plum"],
  ["---", "Caixa..) (1)", "steel"], ["---", "BELL..ated)", "gold"], ["---", "VIRA..H) (9)", "mint"],
  ["---", "VIRAD..(34)", "green"], ["---", "CM4..ter 04", "brick"], ["---", "Musi..t - 12", "violet"],
];

const Led = () => (
  <span className="flex h-[8px] w-[8px] shrink-0 items-center justify-center rounded-full border border-[#4a7a22] bg-[#2c3a1e]">
    <span className="h-[4px] w-[4px] rounded-full bg-[#b4f04a]" />
  </span>
);

const MiniKnob: React.FC<{ turned?: boolean; side?: boolean }> = ({ turned, side }) => (
  <svg viewBox="0 0 12 12" className="h-[12px] w-[12px] shrink-0">
    <circle cx="6" cy="6" r="5.500" fill="#343c43" stroke="#2a3137" />
    <path
      d={side ? "M7 6h3" : turned ? "M7 7l1 2.500" : "M6 2v3"}
      stroke="#cfd6da"
      strokeWidth="1.200"
    />
  </svg>
);

const ChannelRack = () => (
  <section className="flex w-[155px] shrink-0 flex-col bg-[#434c52]">
    <div className="flex h-[23px] shrink-0 items-center gap-[12px] pl-[9px] text-[#949da3]">
      <Caret className="border-t-[#949da3]" />
      <Undo2 size={9} strokeWidth={3} />
      <button
        type="button"
        className="mr-[7px] ml-auto flex h-[17px] w-[64px] items-center justify-between border border-[#394147] bg-[#3d464c] px-[3px] text-[9px] text-[#7e878d] font-['Noto_Sans',sans-serif]"
      >
        Audio
        <Caret className="border-t-[#5d666c]" />
      </button>
    </div>
    <div className="mx-[3px] min-h-0 flex-1 overflow-hidden border border-[#353e44] bg-[#5f686e] pt-[12px]">
      <ul className="grid h-[702px] auto-rows-fr">
        {channels.map(([num, name, tone], i) => (
          <li key={i} className="flex items-center pl-[5px]">
            <Led />
            <span className="ml-[4px] flex gap-px">
              <MiniKnob />
              <MiniKnob turned={num !== "---"} side={num === "---"} />
            </span>
            <span
              className={`ml-[6px] flex h-[19px] w-[26px] shrink-0 items-center justify-end rounded-[3px] border border-[#3f474d] bg-[#565f65] pr-[7px] text-[13px] text-[#9aa3a8] ${NARROW}`}
            >
              {num}
            </span>
            <button
              type="button"
              className={`ml-[6px] flex h-[20px] w-[64px] shrink-0 items-center rounded-[2px] border border-[#3c4549] pr-[3px] text-[9px] font-medium whitespace-nowrap text-[#e8edf0] ${NARROW} ${chTone[tone]}`}
            >
              <span className="flex-1 text-center">{name}</span>
              <Glyph fill d={WAVE} className="h-[12px] w-[12px] shrink-0" />
            </button>
          </li>
        ))}
      </ul>
    </div>
    <button type="button" className="h-[20px] shrink-0 pl-[78px] text-[14px] leading-[18px] font-bold text-[#cfd6da]">
      +
    </button>
  </section>
);

/* ---------- pattern picker ---------- */

const row = (y: number, w: number, ...xs: number[]) => xs.map((x) => [x, y, w]);
const longNotes = [[0, 3, 26], [26, 11, 26], [52, 17, 53]];
const shortNotes = [[0, 3, 13], [26, 11, 13], [52, 17, 13], [79, 17, 13]];

const patterns: [string, number[][]][] = [
  [
    "PERC",
    [
      ...row(2, 3, 4, 8, 15, 20), ...row(5, 3, 26, 31, 41, 46), ...row(8, 3, 56, 61, 67, 72, 82, 88, 93, 99),
      ...row(12, 3, 4, 8, 15, 20), ...row(15, 3, 26, 31, 41, 46), ...row(17, 3, 56, 61, 67, 72, 82, 88, 93, 99),
    ],
  ],
  ["808", shortNotes],
  ["808 #2", [[26, 2, 2], [30, 6, 2], [0, 15, 17], [26, 15, 9], [35, 17, 17], [70, 17, 17]]],
  [
    "MELODIA",
    [[0, 3, 13], [13, 5, 6], [20, 8, 6], [39, 12, 4], [42, 5, 4], [46, 12, 4], [49, 8, 6], [56, 17, 4],
      [62, 17, 4], [65, 5, 4], [68, 12, 4], [72, 8, 6], [82, 8, 3]],
  ],
  ["REESE", longNotes],
  ["KICK", row(17, 3, 0, 26, 39, 52, 79)],
  ["KICK #2", row(17, 3, 0, 20, 26, 39, 52, 79)],
  ["STRINGS", longNotes],
  ["BRASS", shortNotes],
  [
    "808 Cuiabá",
    [...row(2, 6, 52, 65, 78, 91), ...row(6, 6, 0, 13), ...row(8, 6, 26, 39), ...row(11, 6, 59, 72, 85, 98),
      ...row(14, 6, 7, 20), ...row(17, 6, 33, 46)],
  ],
];

const PatternPicker = () => (
  <div className="flex w-[123px] shrink-0 flex-col">
    <div className="flex h-[31px] shrink-0 items-center justify-around pt-[9px] pr-[8px] text-[#7b848a]">
      <Glyph fill d={PIANO} className="h-[13px] w-[13px] text-[#dfe6ea]" />
      <Glyph fill d={WAVE} className="h-[13px] w-[15px]" />
      <Glyph d={NODES} className="h-[13px] w-[13px]" />
    </div>
    <div className="flex min-h-0 flex-1 border border-[#273036] bg-[#343e46]">
      <ul className="grid h-[306px] flex-1 auto-rows-fr pt-[2px] pr-px pl-[2px]">
        {patterns.map(([name, notes]) => (
          <li key={name} className="relative">
            <div className={`flex h-[11px] items-center gap-[3px] bg-[#414a50] pl-[2px] text-[10px] text-[#c0c8cc] ${NARROW}`}>
              <PatternMark />
              {name}
            </div>
            <svg viewBox="0 0 106 20" preserveAspectRatio="none" className="block h-[19px] w-full bg-[#38434b]" fill="#a5aeb4">
              {notes.map(([x, y, w], i) => (
                <rect key={i} x={x} y={y - 1} width={w} height="2" />
              ))}
            </svg>
            {name === "808 #2" && (
              <svg viewBox="0 0 6 10" className="absolute top-[9px] -left-[2px] h-[10px] w-[6px]">
                <path d="M0 0l6 5-6 5z" fill="#e8506a" />
              </svg>
            )}
          </li>
        ))}
      </ul>
      <div className="w-[12px] shrink-0 border-l border-[#273036]">
        <div className="flex h-[11px] items-center justify-center bg-[#4a545a]">
          <span className="h-[5px] w-px bg-[#c0c8cc]" />
        </div>
      </div>
    </div>
    <button type="button" className="h-[18px] shrink-0 pr-[12px] text-[14px] leading-[16px] font-bold text-[#cfd6da]">
      +
    </button>
  </div>
);

/* ---------- playlist ---------- */

const TrackHead: React.FC<{ track: Track }> = ({ track }) => (
  <div className="flex h-[39px] shrink-0 flex-col justify-between rounded-tr-[3px] border-b border-[#343d43] bg-[#4a5459] pr-[4px] pb-[2px] pl-px">
    <span className={`text-[11px] leading-[14px] ${NARROW} ${track.off ? "text-[#727b81]" : "font-medium text-[#d3dade]"}`}>
      {track.name}
    </span>
    <div className="flex items-end justify-between pl-[8px]">
      <span className="text-[9px] leading-[6px] text-[#2b343a]">...</span>
      {track.locked ? (
        <svg viewBox="0 0 10 12" className="h-[12px] w-[10px]">
          <path d="M2.500 6V3.500a2.500 2.500 0 0 1 5 0V6" fill="none" stroke="#7ed321" strokeWidth="1.300" />
          <path d="M0 6h10v6H0z" fill="#7ed321" />
        </svg>
      ) : (
        <Led />
      )}
    </div>
  </div>
);

const Playlist = () => (
  <div className="flex min-w-0 flex-1">
    <div className="flex w-[83px] shrink-0 flex-col">
      <div className="flex h-[32px] shrink-0 flex-col justify-between bg-[#59636a] pt-[3px] pb-[2px] text-[#8a9399] [clip-path:polygon(22%_0,100%_0,100%_100%,0_100%,0_80%)]">
        <div className="flex justify-end gap-[8px] pr-[4px]">
          <Glyph fill d={WAVE} className="h-[10px] w-[14px] text-[#e3e8ea]" />
          <Glyph d={NODES} className="h-[10px] w-[12px]" />
          <Glyph fill d={PIANO} className="h-[11px] w-[11px]" />
        </div>
        <div className={`flex items-center justify-end gap-[3px] pr-px text-[6px] leading-[10px] font-bold text-[#d3dade] ${NARROW}`}>
          <label className="flex items-center gap-px">
            Z-CROSS
            <input type="checkbox" className="h-[8px] w-[8px] appearance-none rounded-[2px] border border-[#d3dade]" />
          </label>
          <label className="flex items-center gap-px">
            STRETCH
            <input type="checkbox" className="h-[8px] w-[8px] appearance-none rounded-[2px] border border-[#d3dade]" />
          </label>
        </div>
      </div>
      <div className="flex h-[20px] shrink-0 items-end justify-between border-b border-[#343d43] bg-[#4a5459] pr-[4px] pb-[2px] pl-[9px]">
        <span className="text-[9px] leading-[6px] text-[#2b343a]">...</span>
        <Led />
      </div>
      <div className="min-h-0 flex-1 overflow-hidden">
        {tracks.map((t) => (
          <TrackHead key={t.name} track={t} />
        ))}
        <TrackHead track={{ name: "Track 25", off: true }} />
      </div>
    </div>
    <div className="w-[3px] shrink-0 bg-[#27313a]" />
    <div className="flex min-w-0 flex-1 flex-col">
      <div className="flex h-[15px] shrink-0 border border-[#353e44] bg-[#4e6068]">
        <button type="button" aria-label="Scroll left" className="flex w-[16px] items-center justify-center bg-[#4c565c] text-[#20282e]">
          <Glyph d="M10 3L5 8l5 5" className="h-[9px] w-[9px] stroke-2" />
        </button>
        <svg viewBox="0 0 856 13" preserveAspectRatio="none" className="h-full min-w-0 flex-1">
          <rect width="702" height="13" fill="#566974" />
          <rect width="702" height="3" fill="#6a89ad" />
          {range(60, 700, 7).map((x) => (
            <rect key={x} x={x} y={4 + Math.floor(noise(x) * 7)} width={6 + noise(x + 3) * 22} height="1" fill={x % 3 ? "#72858a" : "#4c5b80"} />
          ))}
          <rect x="72" y="10" width="48" height="1" fill="#9bb0a0" />
          <rect x="595" y="10" width="80" height="1" fill="#9bb0a0" />
        </svg>
        <button type="button" aria-label="Scroll right" className="flex w-[16px] items-center justify-center bg-[#4c565c] text-[#20282e]">
          <Glyph d="M6 3l5 5-5 5" className="h-[9px] w-[9px] stroke-2" />
        </button>
      </div>
      <div className="relative flex h-[17px] shrink-0 items-center overflow-hidden bg-[#141a24] pl-px text-[9px] text-[#a3abb1] font-['Noto_Sans',sans-serif]">
        {range(1, 97, 4).map((n) => (
          <span key={n} className="shrink-0" style={{ width: BAR * 4 }}>
            {n}
          </span>
        ))}
        <svg viewBox="0 0 12 8" className="absolute top-[2px] left-[24px] h-[8px] w-[12px]">
          <path d="M0 0h12v2L6 8 0 2z" fill="#b4ec3e" />
        </svg>
      </div>
      <div className="relative min-h-0 flex-1 overflow-hidden bg-[#150e26]">
        <GridBackdrop />
        <div className={NARROW}>
          <div className="relative h-[20px] border-b-2 border-[#07040f]" />
          {tracks.map((t) => (
            <Lane key={t.name} track={t} />
          ))}
        </div>
        <div className="absolute top-0 bottom-0 left-[29px] w-px bg-[#8a85a0]/60" />
      </div>
    </div>
    <div className="flex w-[16px] shrink-0 flex-col border-x border-[#273036] bg-[#39434a] text-[#20282e]">
      <div className="flex h-[15px] items-center justify-center bg-[#4c565c]">
        <span className="h-[2px] w-[2px] bg-[#161c20]" />
      </div>
      <button type="button" aria-label="Scroll up" className="flex h-[16px] items-center justify-center border-t border-[#353e44] bg-[#4c565c]">
        <Glyph d="M3 10l5-5 5 5" className="h-[9px] w-[9px] stroke-2" />
      </button>
      <div className="mt-[6px] h-[26px] border border-[#5c676d] bg-[#515c62]" />
      <button type="button" aria-label="Scroll down" className="mt-auto flex h-[15px] items-center justify-center bg-[#56616a]">
        <Glyph d="M3 6l5 5 5-5" className="h-[9px] w-[9px] stroke-2" />
      </button>
    </div>
    <div className="w-[4px] shrink-0" />
  </div>
);

const PlaylistTitle = () => (
  <div className="flex h-[21px] shrink-0 items-center pl-[5px] text-[#dfe6ea]">
    <Caret className="border-t-[#dfe6ea]" />
    <div className="ml-[8px] flex items-center gap-[5px]">
      <Glyph d={MAGNET} fill className="mr-[9px] h-[12px] w-[12px]" />
      <Paperclip size={12} className="rotate-90" />
      <FaPaintBrush size={12} className="-scale-x-100 text-[#6db6ea]" />
      <FaBan size={10} />
      <FaVolumeMute size={12} />
      <Glyph fill d="M0 8l5-5v4h6V3l5 5-5 5V9H5v4z" className="h-[12px] w-[12px]" />
      <Glyph fill d="M1 2h7l6 5v8h-4z" className="h-[11px] w-[11px]" />
      <Maximize size={12} />
      <Search size={12} strokeWidth={3} />
      <FaVolumeUp size={12} />
    </div>
    <div className="ml-[12px] flex items-center gap-[4px] text-[10px] whitespace-nowrap text-[#ccd4d8] font-['Noto_Sans',sans-serif]">
      <Glyph d="M1 6h3l5-4v12l-5-4H1zM12 5l3 3-3 3z" className="h-[12px] w-[12px]" />
      <span>Playlist - Arrangement</span>
      <Caret className="border-t-[#949da3]" />
      <span>VIRADA (DJ DASCH) (63)</span>
      <Caret className="border-t-[#949da3]" />
    </div>
    <div className="mr-[7px] ml-auto flex gap-[6px]">
      <button type="button" aria-label="Minimize playlist"><Glyph d="M3 6h10" className="h-[9px] w-[9px] stroke-3" /></button>
      <button type="button" aria-label="Maximize playlist"><Glyph d="M1 4h14v9H1zM1 5h14" className="h-[9px] w-[9px] stroke-2" /></button>
      <button type="button" aria-label="Close playlist"><Glyph d="M2 2l12 12M14 2L2 14" className="h-[9px] w-[9px] stroke-2" /></button>
    </div>
  </div>
);

export default function App() {
  return (
    <div className="flex h-screen flex-col overflow-hidden bg-[#3a4349] font-['Open_Sans',sans-serif]">
      <Toolbar />
      <main className="flex min-h-0 flex-1">
        <Browser />
        <div className="flex w-[7px] shrink-0 items-center justify-center border-x border-[#2b343a] bg-[#3d464d]">
          <span className="h-[16px] border-l border-dotted border-[#262e34]" />
        </div>
        <ChannelRack />
        <section className="flex min-w-0 flex-1 flex-col border-l-3 border-[#323b42] bg-[#434c52]">
          <PlaylistTitle />
          <div className="flex min-h-0 flex-1 gap-[4px] pb-[2px]">
            <PatternPicker />
            <Playlist />
          </div>
        </section>
      </main>
    </div>
  );
}
